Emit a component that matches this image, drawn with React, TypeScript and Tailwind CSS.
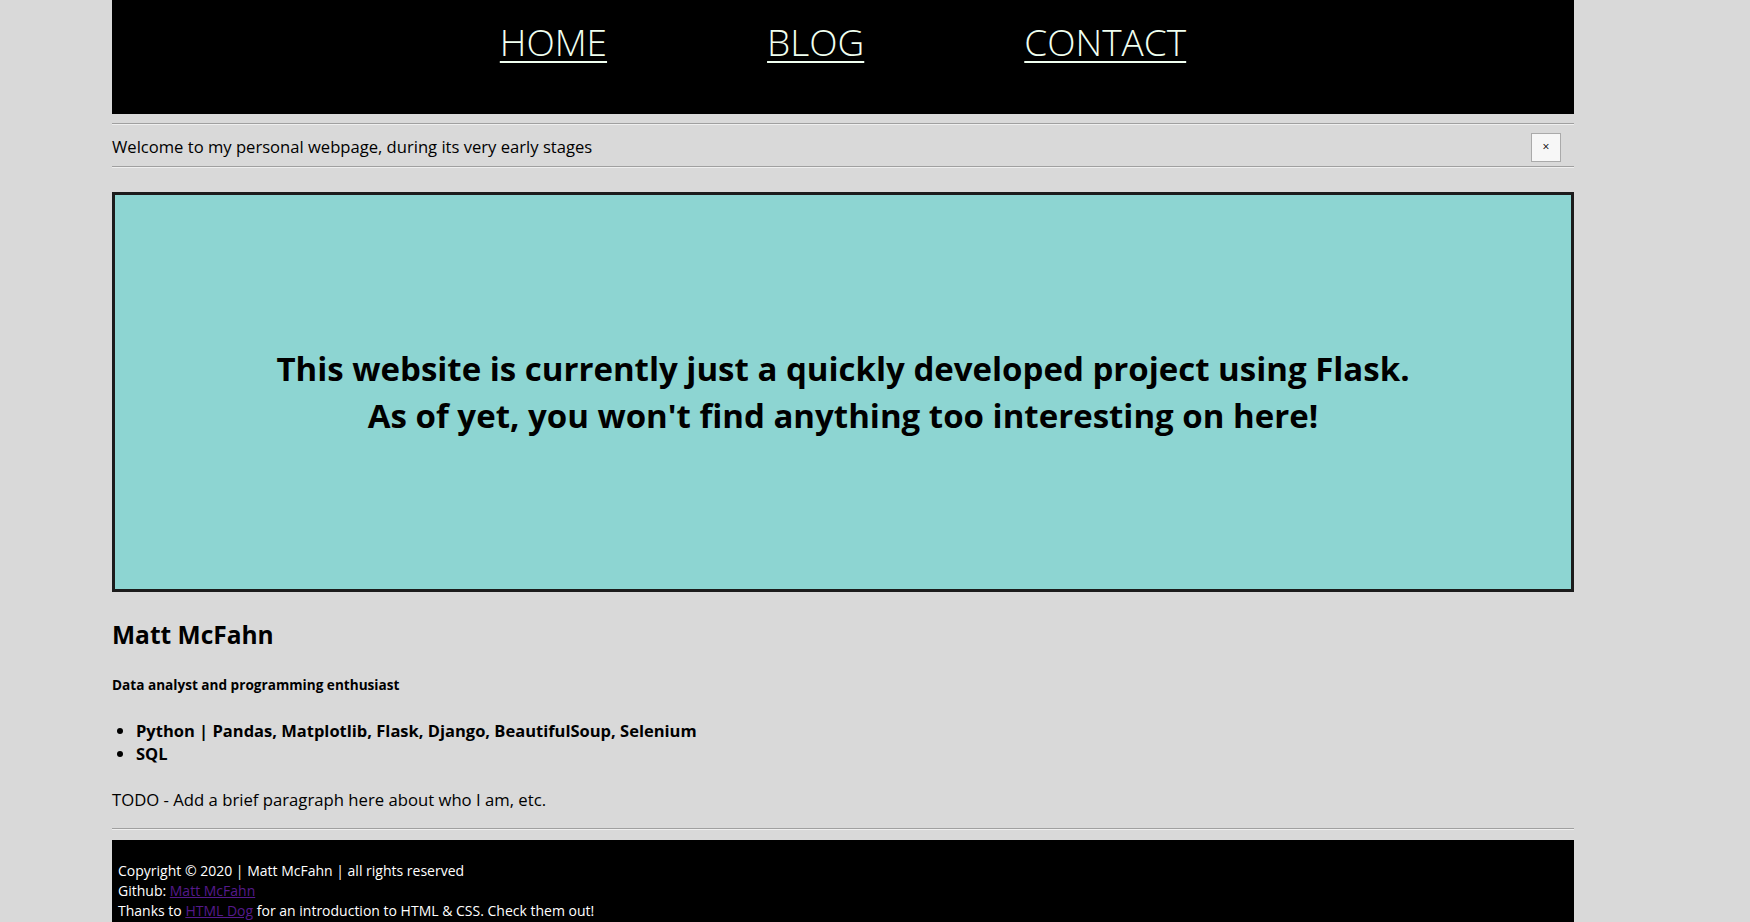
import React from "react";

export default function App() {
  const font = { fontFamily: '"Open Sans", "Noto Sans", sans-serif' };
  return (
    <div className="min-h-[922px] bg-[#d9d9d9] text-black" style={font}>
      <div className="ml-[112px] w-[1462px]">
        <header className="h-[114px] bg-black">
          <nav className="flex justify-center gap-[160px] pt-[16px]">
            <a href="#" className="text-[37px] leading-[52px] font-light text-[#f0fff0] underline decoration-2 underline-offset-[5px]">HOME</a>
            <a href="#" className="text-[37px] leading-[52px] font-light text-[#f0fff0] underline decoration-2 underline-offset-[5px]">BLOG</a>
            <a href="#" className="text-[37px] leading-[52px] font-light text-[#f0fff0] underline decoration-2 underline-offset-[5px]">CONTACT</a>
          </nav>
        </header>
        <div className="mt-[9px] border-t border-b border-t-[#a0a0a0] border-b-[#efefef]" />
        <div className="flex h-[41px] items-center justify-between">
          <span className="mt-[3px] text-[16.6px]">Welcome to my personal webpage, during its very early stages</span>
          <button className="mr-[13px] mt-[3px] flex h-[29px] w-[30px] items-center justify-center border border-[#aaaaaa] bg-[#f7f7f7] text-[12px] leading-none">×</button>
        </div>
        <div className="border-t border-b border-t-[#a0a0a0] border-b-[#efefef]" />
        <section className="mt-[24px] flex h-[400px] items-center justify-center border-[3px] border-[#1c1c1c] bg-[#8dd5d2]">
          <h1 className="text-center text-[33px] font-bold leading-[47px]">
            This website is currently just a quickly developed project using Flask.
            <br />
            As of yet, you won't find anything too interesting on here!
          </h1>
        </section>
        <h2 className="mt-[27px] text-[24.5px] font-bold leading-[32px]">Matt McFahn</h2>
        <h5 className="mt-[25px] text-[13.6px] font-bold leading-[18px]">Data analyst and programming enthusiast</h5>
        <ul className="mt-[25px] list-disc pl-[24px] text-[16.5px] font-bold leading-[23px]">
          <li>Python | Pandas, Matplotlib, Flask, Django, BeautifulSoup, Selenium</li>
          <li>SQL</li>
        </ul>
        <p className="mt-[23px] text-[16.7px] leading-[24px]">TODO - Add a brief paragraph here about who I am, etc.</p>
        <div className="mt-[16px] border-t border-b border-t-[#a0a0a0] border-b-[#efefef]" />
        <footer className="mt-[10px] bg-black px-[6px] pb-[10px] pt-[21px] text-[14px] leading-[20px] text-white">
          <div>Copyright © 2020 | Matt McFahn | all rights reserved</div>
          <div>
            Github: <a href="#" className="text-[#551a8b] underline">Matt McFahn</a>
          </div>
          <div>
            Thanks to <a href="#" className="text-[#551a8b] underline">HTML Dog</a> for an introduction to HTML &amp; CSS. Check them out!
          </div>
        </footer>
      </div>
    </div>
  );
}
